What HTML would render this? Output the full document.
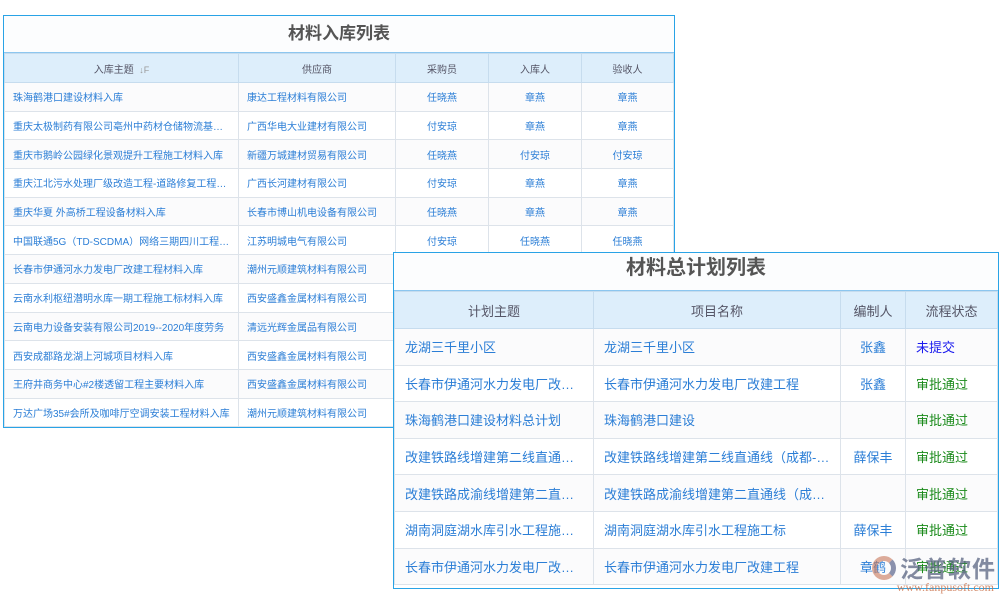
<!DOCTYPE html>
<html><head><meta charset="utf-8">
<style>
*{margin:0;padding:0;box-sizing:border-box}
body{width:1000px;height:600px;background:#fff;position:relative;overflow:hidden;font-family:"Liberation Sans","Noto Sans CJK SC",sans-serif}
.t{position:absolute;background:#fff;border:1px solid #29a3e6}
.ttl{text-align:center;font-weight:bold;color:#555;background:#fcfdfe}
table{border-collapse:collapse;table-layout:fixed;width:100%}
td,th{border:1px solid #dde3ea;white-space:nowrap;overflow:hidden;text-overflow:ellipsis;color:#2b7ed6;font-weight:normal}
th{background:#ddeefb;color:#556;border-color:#c6dcee}
tr:nth-child(even) td{background:#fbfbfc}
#t1{left:3px;top:15px;width:672px;height:413px}
#t1 .ttl{height:37px;line-height:36px;font-size:17px;border-bottom:1px solid #8cc6ef}
#t1 th{height:29px;font-size:10px}
#t1 td{height:28.7px;font-size:10px;padding:0 8px}
#t1 td.c{text-align:center}
#t2{left:393px;top:252px;width:606px;height:337px}
#t2 .ttl{height:38px;line-height:30px;font-size:20px;border-bottom:1px solid #8cc6ef}
#t2 th{height:37px;font-size:13px}
#t2 td{height:36.6px;font-size:13px;padding:0 10px}
#t2 td.c{text-align:center}
.g{color:#1a8a1a!important}.b{color:#1a1aee!important}
.wm{position:absolute;left:900px;top:550px;font-size:23px;color:rgba(90,100,130,.75);letter-spacing:1px;font-weight:bold}
.wm2{position:absolute;left:874px;top:580px;width:120px;text-align:right;font-size:12px;color:rgba(200,110,70,.8);font-family:"Liberation Serif",serif}
.logo{position:absolute;left:872px;top:556px;width:24px;height:24px;border-radius:50%;border:5px solid rgba(200,120,90,.6);border-right-color:rgba(90,100,140,.7)}
</style></head><body>
<div class="t" id="t1">
<div class="ttl">材料入库列表</div>
<table>
<colgroup><col style="width:234px"><col style="width:157px"><col style="width:93px"><col style="width:93px"><col></colgroup>
<tr><th>入库主题 &nbsp;<span style="font-size:9px;color:#999">↓F</span></th><th>供应商</th><th>采购员</th><th>入库人</th><th>验收人</th></tr>
<tr><td>珠海鹤港口建设材料入库</td><td>康达工程材料有限公司</td><td class="c">任晓燕</td><td class="c">章燕</td><td class="c">章燕</td></tr>
<tr><td>重庆太极制药有限公司亳州中药材仓储物流基地工程</td><td>广西华电大业建材有限公司</td><td class="c">付安琼</td><td class="c">章燕</td><td class="c">章燕</td></tr>
<tr><td>重庆市鹅岭公园绿化景观提升工程施工材料入库</td><td>新疆万城建材贸易有限公司</td><td class="c">任晓燕</td><td class="c">付安琼</td><td class="c">付安琼</td></tr>
<tr><td>重庆江北污水处理厂级改造工程-道路修复工程材料</td><td>广西长河建材有限公司</td><td class="c">付安琼</td><td class="c">章燕</td><td class="c">章燕</td></tr>
<tr><td>重庆华夏 外高桥工程设备材料入库</td><td>长春市博山机电设备有限公司</td><td class="c">任晓燕</td><td class="c">章燕</td><td class="c">章燕</td></tr>
<tr><td>中国联通5G（TD-SCDMA）网络三期四川工程材料</td><td>江苏明城电气有限公司</td><td class="c">付安琼</td><td class="c">任晓燕</td><td class="c">任晓燕</td></tr>
<tr><td>长春市伊通河水力发电厂改建工程材料入库</td><td>潮州元顺建筑材料有限公司</td><td class="c">任晓燕</td><td class="c">章燕</td><td class="c">章燕</td></tr>
<tr><td>云南水利枢纽潜明水库一期工程施工标材料入库</td><td>西安盛鑫金属材料有限公司</td><td class="c">付安琼</td><td class="c">章燕</td><td class="c">章燕</td></tr>
<tr><td>云南电力设备安装有限公司2019--2020年度劳务</td><td>清远光辉金属品有限公司</td><td class="c">任晓燕</td><td class="c">章燕</td><td class="c">章燕</td></tr>
<tr><td>西安成都路龙湖上河城项目材料入库</td><td>西安盛鑫金属材料有限公司</td><td class="c">付安琼</td><td class="c">章燕</td><td class="c">章燕</td></tr>
<tr><td>王府井商务中心#2楼透留工程主要材料入库</td><td>西安盛鑫金属材料有限公司</td><td class="c">任晓燕</td><td class="c">章燕</td><td class="c">章燕</td></tr>
<tr><td>万达广场35#会所及咖啡厅空调安装工程材料入库</td><td>潮州元顺建筑材料有限公司</td><td class="c">付安琼</td><td class="c">章燕</td><td class="c">章燕</td></tr>
</table></div>

<div class="t" id="t2">
<div class="ttl">材料总计划列表</div>
<table>
<colgroup><col style="width:199px"><col style="width:247px"><col style="width:65px"><col></colgroup>
<tr><th>计划主题</th><th>项目名称</th><th>编制人</th><th>流程状态</th></tr>
<tr><td>龙湖三千里小区</td><td>龙湖三千里小区</td><td class="c">张鑫</td><td class="b">未提交</td></tr>
<tr><td>长春市伊通河水力发电厂改建工程</td><td>长春市伊通河水力发电厂改建工程</td><td class="c">张鑫</td><td class="g">审批通过</td></tr>
<tr><td>珠海鹤港口建设材料总计划</td><td>珠海鹤港口建设</td><td class="c"></td><td class="g">审批通过</td></tr>
<tr><td>改建铁路线增建第二线直通线材料</td><td>改建铁路线增建第二线直通线（成都-重庆）</td><td class="c">薛保丰</td><td class="g">审批通过</td></tr>
<tr><td>改建铁路成渝线增建第二直通线</td><td>改建铁路成渝线增建第二直通线（成渝）</td><td class="c"></td><td class="g">审批通过</td></tr>
<tr><td>湖南洞庭湖水库引水工程施工标</td><td>湖南洞庭湖水库引水工程施工标</td><td class="c">薛保丰</td><td class="g">审批通过</td></tr>
<tr><td>长春市伊通河水力发电厂改建工程</td><td>长春市伊通河水力发电厂改建工程</td><td class="c">章鹤</td><td class="g">审批通过</td></tr>
</table></div>
<div class="logo"></div>
<div class="wm">泛普软件</div>
<div class="wm2">www.fanpusoft.com</div>
</body></html>
